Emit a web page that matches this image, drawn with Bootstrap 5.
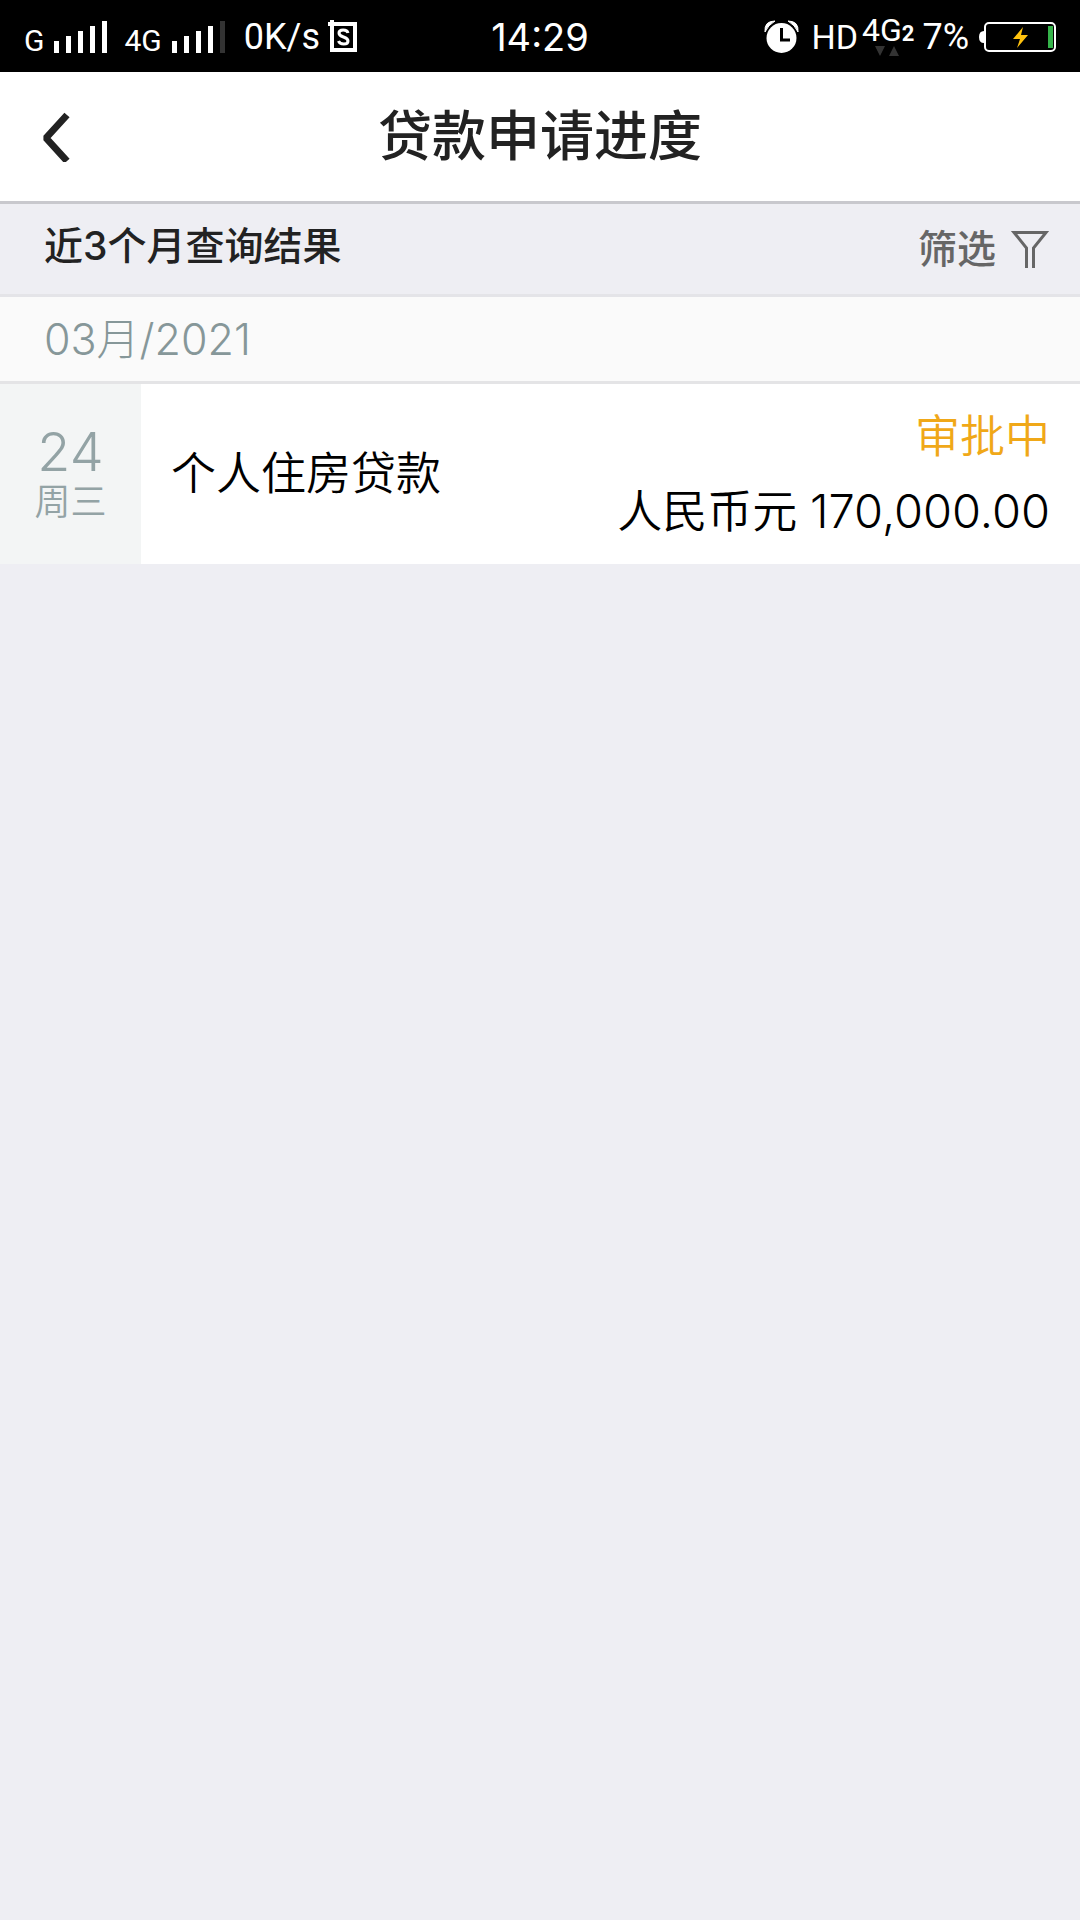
<!DOCTYPE html>
<html lang="zh-CN">
<head>
<meta charset="utf-8">
<meta name="viewport" content="width=device-width, initial-scale=1">
<title>贷款申请进度</title>
<link href="https://cdn.jsdelivr.net/npm/bootstrap@5.3.0/dist/css/bootstrap.min.css" rel="stylesheet">
<style>
body{background:#eeeef3;font-family:Inter,"Noto Sans CJK SC",sans-serif;color:#000}
svg{display:block;flex:none}
.status-bar{height:72px;padding:2px 24px 0;font-family:Roboto,sans-serif;font-size:36px;line-height:40px}
.side{flex:1 1 0}
.net-label{font-size:30px;padding-top:8px}
.rate{margin-left:18px}
.clock{font-family:Inter,sans-serif;font-size:38px}
.hd-label{font-size:34px;margin-left:12px}
.net-type{font-size:32px;line-height:32px;margin-top:-4px}
.net-type b{font-size:22px;line-height:20px}
.battery{margin-left:10px}
.title-bar{height:132px;padding:0 40px;border-bottom:3px solid #c8c8cd}
.title-bar h1{font-size:54px;line-height:64px;font-weight:500;color:#222}
.back-btn{width:32px}
.filter-bar{height:93px;padding:0 30px 0 44px;border-bottom:3px solid #e4e4e8}
.filter-bar h2{font-size:39px;line-height:48px;font-weight:500;color:#222;padding-bottom:6px}
.filter-btn,.filter-btn:hover{font-size:39px;line-height:48px;font-weight:500;color:#666;gap:14px}
.month-row{height:87px;padding:0 44px;background:#fafafa;border-bottom:3px solid #e4e4e6;font-size:43px;line-height:48px;font-weight:300;color:#869799}
.loan-row{min-height:180px;font-size:45px;line-height:56px;font-weight:350;color:#000}
.date-col{width:141px;background:#f3f5f5;color:#93a3a5}
.day-num{font-size:54px;line-height:56px;font-weight:300}
.week-day{font-size:36px;line-height:44px}
.loan-info{padding:0 30px;color:#000}
.amount-col{gap:18px}
.money{font-size:47px;font-weight:300}
.state{color:#f0a818}
</style>
<script src="https://cdn.jsdelivr.net/npm/bootstrap@5.3.0/dist/js/bootstrap.bundle.min.js"></script>
</head>
<body>
<div class="status-bar bg-black text-white d-flex align-items-center">
  <div class="side d-flex align-items-center">
    <span class="net-label">G</span>
    <svg class="ms-2" width="56" height="34" viewBox="0 0 56 34" fill="#fff"><path d="M2 21h5v12H2zM14 16h5v17h-5zM26 11h5v22h-5zM38 6h5v27h-5zM50 1h5v32h-5z"/></svg>
    <span class="net-label ms-3">4G</span>
    <svg class="ms-2" width="56" height="34" viewBox="0 0 56 34" fill="#fff"><path d="M2 21h5v12H2zM14 16h5v17h-5zM26 11h5v22h-5zM38 6h5v27h-5z"/><path fill="#333" d="M50 1h5v32h-5z"/></svg>
    <span class="rate">0K/s</span>
    <svg class="ms-2" width="31" height="34" viewBox="0 0 31 34" fill="none" stroke="#fff"><path stroke-width="4" d="M4 4h23v26H4zM0 4h5M4 0v5"/><path stroke-width="3" d="M20 13c-1-4-9-4-9 0 0 5 9 3 9 8 0 4-8 4-9.500 0"/></svg>
  </div>
  <span class="clock">14:29</span>
  <div class="side d-flex align-items-center justify-content-end">
    <svg width="35" height="34" viewBox="0 0 35 34"><circle cx="17.500" cy="18" r="15" fill="#fff"/><path d="M1 12Q0 1 11 1Q4 5 1 12M34 12Q35 1 24 1Q31 5 34 12" fill="#fff" stroke="#fff" stroke-width="1"/><path d="M17.500 8v12H26" fill="none" stroke="#000" stroke-width="3"/></svg>
    <span class="hd-label">HD</span>
    <div class="ms-1 net-type">
      <div>4G<b>2</b></div>
      <svg class="ms-2" width="34" height="10" viewBox="0 0 34 10" fill="#333"><path d="M5 0h10l-5 10zM19 10h10L24 0z"/></svg>
    </div>
    <span class="ms-2">7%</span>
    <svg class="battery" width="77" height="32" viewBox="0 0 77 32"><path d="M5 10Q0 10 0 16t5 6z" fill="#fff"/><rect x="6" y="2" width="70" height="28" rx="4" fill="none" stroke="#fff" stroke-width="2"/><path d="M69 5h5v22h-5z" fill="#35b34a"/><path d="M44 6L34 18h7l-3 9 11-13h-7z" fill="#ffc20e"/></svg>
  </div>
</div>
<header class="title-bar bg-white d-flex align-items-center justify-content-between">
  <button type="button" class="btn border-0 p-0 back-btn" aria-label="返回"><svg width="32" height="50" viewBox="0 0 32 50" fill="none" stroke="#222" stroke-width="7" stroke-linejoin="bevel"><path d="M27 3L6 26 27 49"/></svg></button>
  <h1 class="m-0">贷款申请进度</h1>
  <span class="back-btn"></span>
</header>
<main>
  <div class="filter-bar d-flex align-items-center justify-content-between">
    <h2 class="m-0">近3个月查询结果</h2>
    <button type="button" class="btn border-0 p-0 filter-btn d-flex align-items-center">筛选
      <svg width="40" height="40" viewBox="0 0 40 40" fill="none" stroke="#666" stroke-width="3"><path d="M16.500 39V19L4 3.500h32L23.500 19v20"/></svg></button>
  </div>
  <div class="month-row d-flex align-items-center">03月/2021</div>
  <a href="#" class="loan-row bg-white d-flex text-decoration-none">
    <div class="date-col d-flex flex-column align-items-center justify-content-center">
      <span class="day-num">24</span><span class="week-day">周三</span>
    </div>
    <div class="loan-info flex-grow-1 d-flex align-items-center justify-content-between">
      <span>个人住房贷款</span>
      <div class="amount-col d-flex flex-column align-items-end">
        <span class="state">审批中</span><span>人民币元 <span class="money">170,000.00</span></span>
      </div>
    </div>
  </a>
</main>
</body>
</html>
